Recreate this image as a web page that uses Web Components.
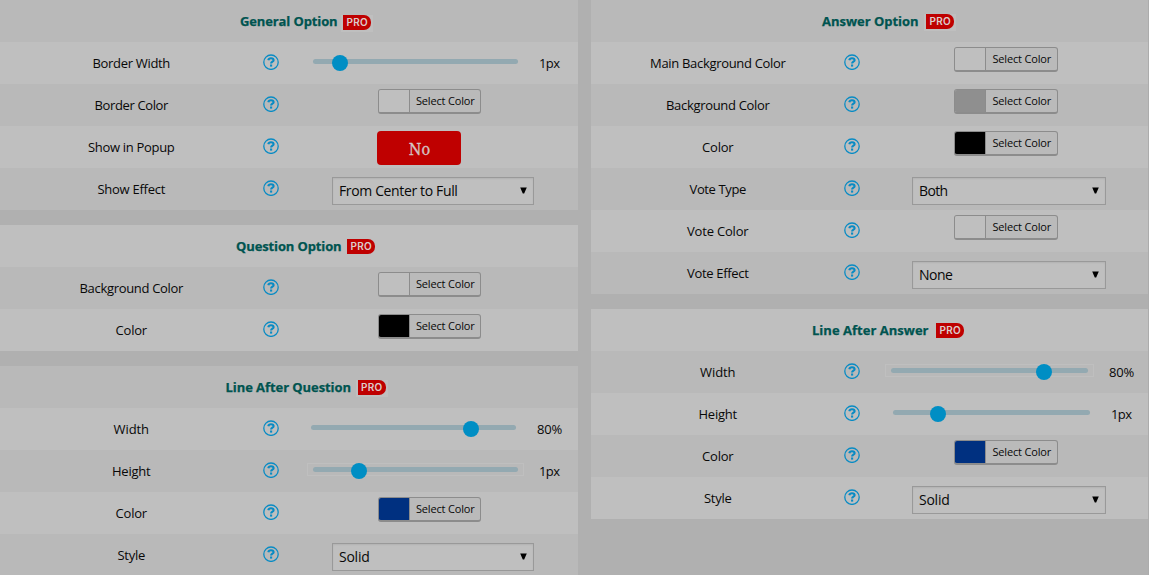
<!DOCTYPE html>
<html lang="en">
<head>
<meta charset="utf-8">
<title>Poll theme options</title>
<style>
html,body{margin:0;padding:0}
body{width:1149px;height:575px;overflow:hidden;background:#b0b0b0;font-family:"Open Sans","Noto Sans",sans-serif;color:#080808}
</style>
</head>
<body>
<options-page>
  <options-column slot="left" style="--label:262px;--icon-shift:1px;--sel-x:52px;--sel-w:202px;--color-x:98px;--color-w:103px;--track:205px">
    <option-panel heading="General Option" w="97" gap="4" drop="1" first="dark">
      <option-row label="Border Width" w="77"><range-slider x="33" at="27" value="1px"></range-slider></option-row>
      <option-row label="Border Color" w="73"><color-button color="#bfbfbf"></color-button></option-row>
      <option-row label="Show in Popup" w="86"><toggle-button>No</toggle-button></option-row>
      <option-row label="Show Effect" w="67"><select-box text="From Center to Full" w="118"></select-box></option-row>
    </option-panel>
    <option-panel heading="Question Option" w="105" gap="4" first="light">
      <option-row label="Background Color" w="103"><color-button color="#bfbfbf"></color-button></option-row>
      <option-row label="Color" w="31"><color-button color="#000"></color-button></option-row>
    </option-panel>
    <option-panel heading="Line After Question" w="125" gap="5" first="dark">
      <option-row label="Width" w="35"><range-slider x="31" at="160" value="80%"></range-slider></option-row>
      <option-row label="Height" w="38"><range-slider x="33" at="46" value="1px"></range-slider></option-row>
      <option-row label="Color" w="31"><color-button color="#003080"></color-button></option-row>
      <option-row label="Style" w="27"><select-box text="Solid" w="30"></select-box></option-row>
    </option-panel>
  </options-column>
  <options-column slot="right" style="--label:253px;--icon-shift:0px;--sel-x:50px;--sel-w:194px;--color-x:92px;--color-w:104px;--track:197px;--head-x:39px">
    <option-panel heading="Answer Option" w="96" gap="6" first="dark">
      <option-row label="Main Background Color" w="135"><color-button color="#bfbfbf"></color-button></option-row>
      <option-row label="Background Color" w="103"><color-button color="#8f8f8f"></color-button></option-row>
      <option-row label="Color" w="31"><color-button color="#000"></color-button></option-row>
      <option-row label="Vote Type" w="56"><select-box text="Both" w="28"></select-box></option-row>
      <option-row label="Vote Color" w="61"><color-button color="#bfbfbf"></color-button></option-row>
      <option-row label="Vote Effect" w="61"><select-box text="None" w="33"></select-box></option-row>
    </option-panel>
    <option-panel heading="Line After Answer" w="116" gap="6" first="light">
      <option-row label="Width" w="35"><range-slider x="29" at="153" value="80%"></range-slider></option-row>
      <option-row label="Height" w="38"><range-slider x="31" at="45" value="1px"></range-slider></option-row>
      <option-row label="Color" w="31"><color-button color="#003080"></color-button></option-row>
      <option-row label="Style" w="27"><select-box text="Solid" w="30"></select-box></option-row>
    </option-panel>
  </options-column>
</options-page>
<script>
class Base extends HTMLElement {
  connectedCallback() {
    if (this.shadowRoot) return;
    this.attachShadow({mode: 'open'}).innerHTML = this.render();
  }
  a(name, fallback = '') { return this.getAttribute(name) ?? fallback; }
}

/* Text tracked evenly so that it fills a given width. */
customElements.define('fit-text', class extends Base {
  render() { return `<style>:host{display:inline-block;white-space:nowrap;width:${this.a('w')}px;text-align:left}span{display:inline-block}</style><span>${this.a('text')}</span>`; }
  connectedCallback() {
    super.connectedCallback();
    const s = this.shadowRoot.querySelector('span');
    const spare = +this.a('w') + 0.5 - s.getBoundingClientRect().width;
    s.style.letterSpacing = (spare / this.a('text').length).toFixed(3) + 'px';
  }
});

customElements.define('options-page', class extends Base {
  render() { return `<style>
    :host{display:grid;grid-template-columns:578px 557px;column-gap:13px;width:1148px;height:575px;overflow:hidden;border-right:1px solid #acacac}
    </style><slot name="left"></slot><slot name="right"></slot>`; }
});

customElements.define('options-column', class extends Base {
  render() { return `<style>:host{display:flex;flex-direction:column;gap:15px}</style><slot></slot>`; }
});

customElements.define('pro-badge', class extends Base {
  render() { return `<style>
    :host{display:block;padding:0 2px 2px;background:#bfbfbf}
    b{display:flex;align-items:center;justify-content:center;width:28px;height:15px;border-radius:0 7px 7px 0;background:#bf0000;color:#dccccc;font:600 10px/15px Inter,sans-serif}
    </style><b><fit-text text="PRO" w="21"></fit-text></b>`; }
});

customElements.define('option-panel', class extends Base {
  render() {
    const dark = this.a('first') === 'dark';
    const [odd, even] = dark ? ['#b9b9b9', '#bfbfbf'] : ['#bfbfbf', '#b9b9b9'];
    return `<style>
    :host{display:block}
    header{display:flex;justify-content:center;align-items:flex-start;gap:${this.a('gap')}px;height:42px;box-sizing:border-box;padding-left:var(--head-x,35px);background:${odd};color:#005450;font-size:13px;font-weight:700;-webkit-text-stroke:.25px #005450;line-height:42px}
    pro-badge{margin-top:${14 + +this.a('drop', 0)}px;-webkit-text-stroke:0}
    ::slotted(:nth-child(odd)){background:${even}}
    ::slotted(:nth-child(even)){background:${odd}}
    </style><header><fit-text text="${this.a('heading')}" w="${this.a('w')}"></fit-text><pro-badge></pro-badge></header><slot></slot>`;
  }
});

customElements.define('help-icon', class extends Base {
  render() { return `<style>:host{display:block}svg{display:block}</style>
    <svg width="16" height="16" viewBox="0 0 16 16" fill="none" stroke="#088bc4">
    <circle cx="8" cy="8.2" r="7.2" stroke-width="1.3"/>
    <path d="M5.3 6.2C5.6 4.8 6.6 4.2 8 4.2c1.6 0 2.6.8 2.6 2C10.6 7.8 8.1 7.7 8.1 9.6" stroke-width="2.1"/>
    <path d="M8.1 10.5v2.1" stroke-width="2.1"/></svg>`; }
});

customElements.define('option-row', class extends Base {
  render() { return `<style>
    :host{display:grid;grid-template-columns:var(--label) 18px 1fr;height:42px;font-size:13px;line-height:42px}
    .label{text-align:center}
    help-icon{margin:12px 0 0 var(--icon-shift)}
    .control{display:flex;align-items:flex-start}
    </style><div class="label"><fit-text text="${this.a('label')}" w="${this.a('w')}"></fit-text></div><help-icon></help-icon><div class="control"><slot></slot></div>`; }
});

customElements.define('range-slider', class extends Base {
  render() {
    const v = this.a('value'), pct = v.endsWith('%');
    return `<style>
    :host{display:flex;margin-left:${this.a('x') - 6}px}
    .box{box-sizing:border-box;width:calc(var(--track) + 12px);height:13px;margin-top:13px;border:1px solid #bfbfbf;padding:3px 5px}
    .track{position:relative;height:5px;border-radius:3px;background:#93a9b1}
    .thumb{position:absolute;left:${this.a('at') - 8}px;top:-4px;width:16px;height:16px;border-radius:50%;background:#008ec4}
    .value{margin-left:15px;height:42px}
    </style><div class="box"><div class="track"><div class="thumb"></div></div></div>
    <div class="value"><fit-text text="${v}" w="${pct ? 24.5 : 20}"></fit-text></div>`;
  }
});

customElements.define('color-button', class extends Base {
  render() { return `<style>
    :host{display:flex;box-sizing:border-box;width:var(--color-w);height:25px;margin:5px 0 0 var(--color-x);border:1px solid #8c8c8c;border-bottom-width:2px;border-radius:3px;background:#bababa;overflow:hidden}
    .swatch{width:30px;background:${this.a('color')};border-right:1px solid #8c8c8c}
    .text{flex:1;text-align:center;font-size:11px;line-height:22px}
    </style><div class="swatch"></div><div class="text"><fit-text text="Select Color" w="58"></fit-text></div>`; }
});

customElements.define('toggle-button', class extends Base {
  render() { return `<style>
    :host{display:block;box-sizing:border-box;width:84px;height:34px;margin:5px 0 0 97px;padding-left:1px;border-radius:4px;background:#bf0000;color:#d4c4c4;text-align:center;font:16px/37px "DejaVu Serif Condensed","DejaVu Serif",serif;font-stretch:condensed;-webkit-text-stroke:.3px #d4c4c4}
    </style><slot></slot>`; }
});

customElements.define('select-box', class extends Base {
  render() { return `<style>
    :host{display:flex;justify-content:space-between;box-sizing:border-box;width:var(--sel-w);height:28px;margin:9px 0 0 var(--sel-x);padding:0 6px;border:1px solid #999;background:#bfbfbf;box-shadow:inset 0 1px 2px rgba(0,0,0,.07);font-size:14px;line-height:26px}
    svg{margin-top:9px}
    </style><fit-text text="${this.a('text')}" w="${this.a('w')}"></fit-text><svg width="7" height="7" viewBox="0 0 7 7"><path d="M.2 .5h6.6L4.2 6.5H2.8z" fill="#000"/></svg>`; }
});
</script>
</body>
</html>
